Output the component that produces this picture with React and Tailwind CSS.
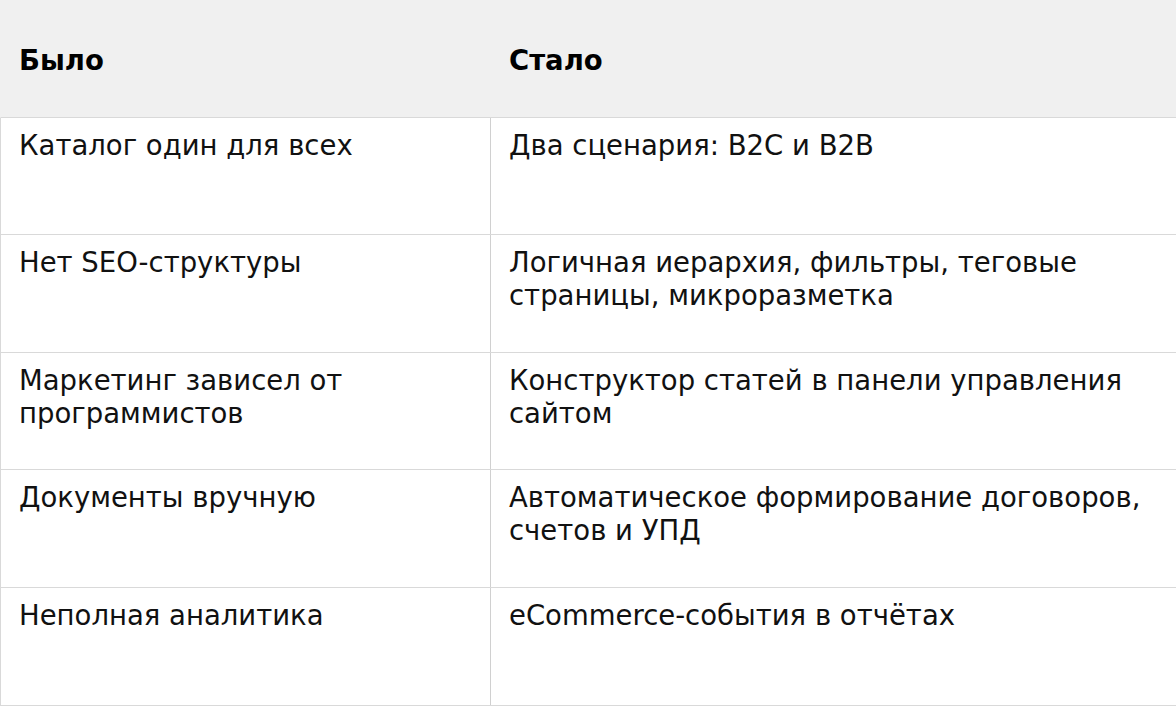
const rows = [
  ['Каталог один для всех', 'Два сценария: B2C и B2B'],
  ['Нет SEO-структуры', 'Логичная иерархия, фильтры, теговые страницы, микроразметка'],
  ['Маркетинг зависел от программистов', 'Конструктор статей в панели управления сайтом'],
  ['Документы вручную', 'Автоматическое формирование договоров, счетов и УПД'],
  ['Неполная аналитика', 'eCommerce-события в отчётах'],
];

const App = () => {
  return (
    <div className="min-h-screen bg-white font-['DejaVu_Sans',sans-serif] text-[27.5px] leading-[33px] text-[#111] overflow-hidden">
      <div className="grid grid-cols-[490px_1fr] h-[117.6px] bg-[#f0f0f0] border-b border-l border-[#f0f0f0] border-b-[#d9d9d9] font-bold text-black">
        <div className="flex items-center px-[18px] pt-[4px]">Было</div>
        <div className="flex items-center px-[18px] pt-[4px]">Стало</div>
      </div>
      {rows.map(([before, after], i) => (
        <div
          key={i}
          className="grid grid-cols-[490px_1fr] h-[117.6px] border-b border-l border-[#d9d9d9]"
        >
          <div className="px-[18px] pt-[11px] border-r border-[#d0d0d0]">{before}</div>
          <div className="px-[18px] pt-[11px]">{after}</div>
        </div>
      ))}
    </div>
  );
};

export default App;
